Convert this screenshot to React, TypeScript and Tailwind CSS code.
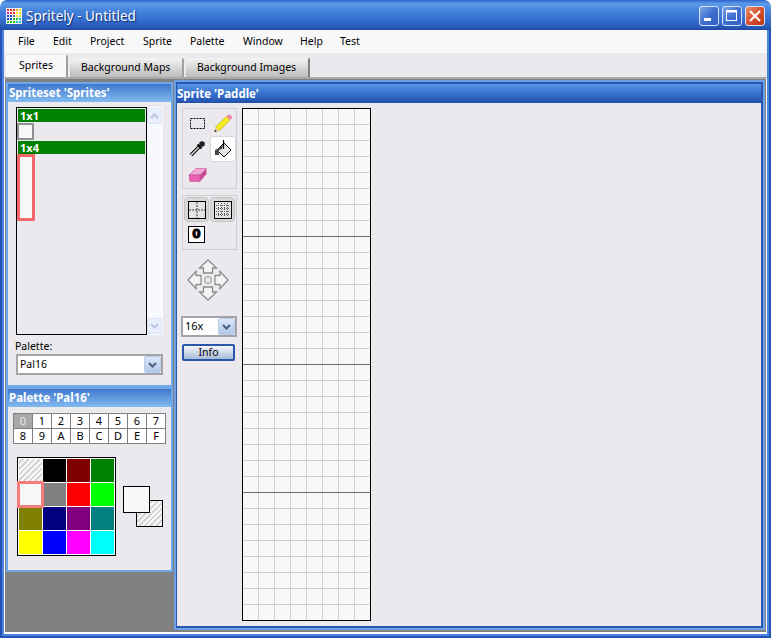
import React from 'react';

const hatch = 'bg-[repeating-linear-gradient(135deg,#f8f8f8_0px,#f8f8f8_2px,#d4d4d4_2px,#d4d4d4_4px)]';

const menus = [
  { label: 'File', w: 'w-[35px]' },
  { label: 'Edit', w: 'w-[37px]' },
  { label: 'Project', w: 'w-[53px]' },
  { label: 'Sprite', w: 'w-[47px]' },
  { label: 'Palette', w: 'w-[53px]' },
  { label: 'Window', w: 'w-[57px]' },
  { label: 'Help', w: 'w-[40px]' },
  { label: 'Test', w: 'w-[40px]' },
];

const swatches = [
  'bg-[#f8f8f8]', 'bg-black', 'bg-[#800000]', 'bg-[#008000]',
  'bg-[#f8f8f8]', 'bg-[#808080]', 'bg-[#ff0000]', 'bg-[#00ff00]',
  'bg-[#808000]', 'bg-[#000080]', 'bg-[#800080]', 'bg-[#008080]',
  'bg-[#ffff00]', 'bg-[#0000ff]', 'bg-[#ff00ff]', 'bg-[#00ffff]',
];

const digits = ['0', '1', '2', '3', '4', '5', '6', '7', '8', '9', 'A', 'B', 'C', 'D', 'E', 'F'];

function AppIcon() {
  const rows = [
    ['#e03030', '#e03030', '#e03030', '#f0a020', '#f0e020'],
    ['#c020c0', '#e03030', '#e03030', '#f0e020', '#f0e020'],
    ['#2040e0', '#2040e0', '#808080', '#f0e020', '#f0e020'],
    ['#2040e0', '#2040e0', '#20c020', '#20c020', '#20c0c0'],
    ['#20c020', '#20c020', '#20c020', '#20c0c0', '#20c0c0'],
  ];
  return (
    <svg width="16" height="16" viewBox="0 0 16 16" className="shrink-0">
      <rect width="16" height="16" fill="#f4f4f4" />
      {rows.map((row, y) => row.map((c, x) => (
        <rect key={`${x}-${y}`} x={1 + x * 3} y={1 + y * 3} width="2" height="2" fill={c} />
      )))}
    </svg>
  );
}

function CaptionButton({ kind }: { kind: 'min' | 'max' | 'close' }) {
  const bg = kind === 'close'
    ? 'bg-[linear-gradient(135deg,#e8906c,#d8502c_50%,#b83414)]'
    : 'bg-[linear-gradient(135deg,#7ea6e8,#3f70d0_50%,#2f5cc0)]';
  return (
    <div className={`w-[20px] h-[20px] rounded-[3px] border border-[#d8e4f8] flex items-center justify-center ${bg}`}>
      <svg width="16" height="16" viewBox="0 0 16 16">
        {kind === 'min' && <rect x="3" y="10" width="7" height="3" fill="#fff" />}
        {kind === 'max' && (
          <g fill="none" stroke="#fff">
            <rect x="2.5" y="2.5" width="10" height="10" />
            <path d="M2 3.5H13" strokeWidth="2" />
          </g>
        )}
        {kind === 'close' && <path d="M3 3L13 13M13 3L3 13" stroke="#fff" strokeWidth="2.2" />}
      </svg>
    </div>
  );
}

function ComboArrow() {
  return (
    <div className="w-[17px] self-stretch rounded-[2px] border border-[#b8cce8] bg-[linear-gradient(#dbe6f8,#b4c8ea)] flex items-center justify-center">
      <svg width="9" height="6" viewBox="0 0 9 6">
        <path d="M1 1L4.5 4.5L8 1" fill="none" stroke="#4d6185" strokeWidth="2" />
      </svg>
    </div>
  );
}

function SelectIcon() {
  return (
    <svg width="24" height="24" viewBox="0 0 24 24">
      <rect x="5.5" y="7.5" width="14" height="10" fill="none" stroke="#000" strokeDasharray="2 1" />
    </svg>
  );
}

function PencilIcon() {
  return (
    <svg width="24" height="24" viewBox="0 0 24 24">
      <path d="M4.5 16L15.5 5.5L19 9L8 20Z" fill="#f4ea20" stroke="#b8a800" strokeWidth="0.6" />
      <path d="M15.5 5.5L17.5 3.5Q19 3 20.5 5T19 9Z" fill="#f088b0" />
      <path d="M4.5 16L3.5 21L8 20Z" fill="#e8d8a0" />
      <path d="M3.5 21L4 18.5L6 20.5Z" fill="#202020" />
    </svg>
  );
}

function DropperIcon() {
  return (
    <svg width="24" height="24" viewBox="0 0 24 24">
      <path d="M6 18L14 10" stroke="#000" strokeWidth="3.6" />
      <path d="M6 18L14 10" stroke="#d8d8d8" strokeWidth="1.6" />
      <path d="M12.5 7.5L16.5 11.5" stroke="#000" strokeWidth="2" />
      <circle cx="17" cy="7" r="2.8" fill="#202020" />
    </svg>
  );
}

function FillIcon() {
  return (
    <svg width="24" height="24" viewBox="0 0 24 24">
      <path d="M13 6L20 13L13 20L6 13Z" fill="#e4e4e4" stroke="#000" />
      <path d="M6 12L12 8L11 12L8 13L8 18H4V13Z" fill="#484848" />
      <path d="M12.5 3V12" stroke="#000" strokeWidth="1.2" />
    </svg>
  );
}

function EraserIcon() {
  return (
    <svg width="24" height="24" viewBox="0 0 24 24">
      <path d="M4 12L11 5.5H21.5L15 12Z" fill="#f4a8d4" stroke="#c05098" strokeWidth="0.6" />
      <path d="M4 12H15V18.5H5Z" fill="#e860b0" stroke="#c05098" strokeWidth="0.6" />
      <path d="M15 12L21.5 5.5V11L15 18.5Z" fill="#c84c98" />
    </svg>
  );
}

function GridCross() {
  return (
    <svg width="18" height="18" viewBox="0 0 18 18">
      <rect x="0.5" y="0.5" width="17" height="17" fill="#e4e4e4" stroke="#000" />
      <path d="M9 1V17M1 9H17" stroke="#404040" strokeDasharray="2 1" />
    </svg>
  );
}

function GridFine() {
  return (
    <svg width="18" height="18" viewBox="0 0 18 18">
      <rect x="0.5" y="0.5" width="17" height="17" fill="#e4e4e4" stroke="#000" />
      <path d="M4.5 2V16M7.5 2V16M10.5 2V16M13.5 2V16M2 4.5H16M2 7.5H16M2 10.5H16M2 13.5H16" stroke="#606060" strokeDasharray="1 1" />
    </svg>
  );
}

function MoveArrows() {
  const arrow = 'M0 -20L8.5 -12H4.5V-7H-4.5V-12H-8.5Z';
  return (
    <svg width="44" height="44" viewBox="-22 -22 44 44">
      {[0, 90, 180, 270].map(r => (
        <path key={r} d={arrow} transform={`rotate(${r})`} fill="#f4f4f6" stroke="#8c8c8c" strokeWidth="1.3" />
      ))}
      <circle cx="0" cy="0" r="3.5" fill="#ebe9ed" stroke="#8c8c8c" />
    </svg>
  );
}

function ScrollButton({ up }: { up?: boolean }) {
  return (
    <div className="h-[16px] rounded-[2px] border border-[#dfe6f6] bg-[#e8eefb] flex items-center justify-center">
      <svg width="9" height="6" viewBox="0 0 9 6">
        <path d={up ? 'M1 5L4.5 1.5L8 5' : 'M1 1L4.5 4.5L8 1'} fill="none" stroke="#b8c6e0" strokeWidth="2" />
      </svg>
    </div>
  );
}

function PanelTitle({ children }: { children: React.ReactNode }) {
  return (
    <div className="h-[18px] shrink-0 pl-[1px] flex items-center bg-[linear-gradient(#3f78cc,#82baf0)] text-white font-bold text-[11.5px] whitespace-nowrap">
      {children}
    </div>
  );
}

export default function App() {
  return (
    <div className='w-[771px] h-[638px] flex flex-col overflow-hidden text-[10.5px] text-black bg-white font-["Noto_Sans",sans-serif]'>
      {/* title bar */}
      <div className="h-[30px] shrink-0 rounded-t-[7px] flex items-center pl-[6px] pr-[6px] bg-[linear-gradient(#2c64cc,#5c9ae8_12%,#4484dc_35%,#3a74d4_60%,#2858b8_90%,#2048a4)]">
        <div className="mt-[2px]"><AppIcon /></div>
        <span className="ml-[4px] mt-[3px] text-white text-[13.5px] [text-shadow:1px_1px_1px_#0f2a70] flex-1">Spritely - Untitled</span>
        <div className="flex gap-[3px] mt-[2px]">
          <CaptionButton kind="min" />
          <CaptionButton kind="max" />
          <CaptionButton kind="close" />
        </div>
      </div>

      <div className="flex-1 min-h-0 flex border-x-2 border-b-2 border-[#2453b8]">
        <div className="flex-1 min-w-0 flex flex-col border-x-2 border-b-2 border-[#4a84dc]">
          <div className="flex-1 min-h-0 flex flex-col border-b-2 border-white bg-[#ebe9ed]">
            {/* menu */}
            <div className="h-[23px] shrink-0 pl-[14px] pt-[1px] flex items-center bg-[#f8f8f8]">
              {menus.map(m => (
                <span key={m.label} className={m.w}>{m.label}</span>
              ))}
            </div>

            {/* tabs */}
            <div className="h-[24px] shrink-0 flex items-end pl-[2px] gap-[2px]">
              <div className="w-[62px] h-[22px] pl-[13px] pb-[1px] rounded-t-[2px] border-r-2 border-[#a0a0a0] bg-[#f8f8f8] flex items-center">Sprites</div>
              <div className="w-[114px] h-[19px] pl-[11px] rounded-t-[2px] border-r-2 border-[#a0a0a0] bg-[linear-gradient(#f4f4f4,#bcbcbc)] flex items-center whitespace-nowrap">Background Maps</div>
              <div className="w-[124px] h-[19px] pl-[11px] rounded-t-[2px] border-r-2 border-[#808080] bg-[linear-gradient(#f4f4f4,#bcbcbc)] flex items-center whitespace-nowrap">Background Images</div>
            </div>

            {/* work area */}
            <div className="flex-1 min-h-0 flex border-t-2 border-t-[#a8a8a8] border-l border-l-white border-r border-r-white bg-[#808080] pt-[1px]">
              <div className="w-[169px] shrink-0 flex flex-col pt-[2px] pl-[1px] pr-[1px]">
                {/* spriteset */}
                <div className="h-[305px] shrink-0 flex flex-col border-2 border-[#6ea8e8] bg-[#ebe9ed]">
                  <PanelTitle>Spriteset 'Sprites'</PanelTitle>
                  <div className="pl-[8px] pt-[5px]">
                    <div className="flex">
                      <div className="w-[131px] h-[228px] border border-black p-[1px]">
                        <div className="h-[13px] bg-[#008000] text-white font-bold text-[11px] leading-[13px] pl-[2px]">1x1</div>
                        <div className="w-[17px] h-[17px] mt-[1px] -ml-[1px] border-2 border-[#909090] bg-[#f8f8f8]"></div>
                        <div className="h-[13px] mt-[1px] bg-[#008000] text-white font-bold text-[11px] leading-[13px] pl-[2px]">1x4</div>
                        <div className="w-[18px] h-[67px] -ml-[1px] border-[3px] border-[#f4686c] bg-[#f8f8f8]"></div>
                      </div>
                      <div className="w-[16px] h-[228px] bg-[#f8f9ff] flex flex-col justify-between py-[1px] pr-[1px]">
                        <ScrollButton up />
                        <ScrollButton />
                      </div>
                    </div>
                    <div className="mt-[4px] -ml-[1px] h-[14px] leading-[14px]">Palette:</div>
                    <div className="mt-[1px] w-[147px] h-[21px] border-2 border-[#a4a4a8] bg-white flex items-center pl-[2px]">
                      <span className="flex-1">Pal16</span>
                      <ComboArrow />
                    </div>
                  </div>
                </div>

                {/* palette */}
                <div className="h-[185px] shrink-0 flex flex-col border-2 border-[#6ea8e8] bg-[#ebe9ed]">
                  <PanelTitle>Palette 'Pal16'</PanelTitle>
                  <div className="pl-[5px] pt-[6px]">
                    <div className="w-[153px] grid grid-cols-8 border-t border-l border-[#808080] bg-white">
                      {digits.map((d, i) => (
                        <div key={d} className={`h-[15px] border-r border-b border-[#808080] flex items-center justify-center text-[11px] ${i === 0 ? 'bg-[#a8a8a8] text-[#e8e8e8]' : ''}`}>{d}</div>
                      ))}
                    </div>
                    <div className="flex mt-[13px] ml-[4px]">
                      <div className="w-[99px] h-[99px] border border-black bg-white p-[1px] grid grid-cols-[repeat(4,23px)] grid-rows-[repeat(4,23px)] gap-[1px]">
                        {swatches.map((c, i) => (
                          <div key={i} className={i === 0 ? hatch : i === 4 ? `${c} relative` : c}>
                            {i === 4 && <div className="absolute -left-[2px] -top-[2px] w-[27px] h-[27px] border-[3px] border-[#f47c7c] bg-[#f8f8f8]"></div>}
                          </div>
                        ))}
                      </div>
                      <div className="relative ml-[7px] mt-[29px] w-[40px] h-[41px]">
                        <div className={`absolute left-[13px] top-[14px] w-[27px] h-[27px] border border-black ${hatch}`}></div>
                        <div className="absolute left-0 top-0 w-[27px] h-[27px] border border-black bg-[#f8f8f8]"></div>
                      </div>
                    </div>
                  </div>
                </div>
              </div>

              {/* sprite editor */}
              <div className="flex-1 min-w-0 mb-[2px] mr-[1px] flex border-2 border-[#6ea0e4]">
                <div className="flex-1 min-w-0 flex flex-col border-2 border-l border-[#2a56b4] bg-[#ebe9ed]">
                  <div className="h-[19px] shrink-0 pt-[1px] flex items-center bg-[linear-gradient(#5a98e4,#3a74d0_45%,#2050ac)] text-white font-bold text-[11.5px]">Sprite 'Paddle'</div>
                  <div className="flex-1 min-h-0 flex pt-[5px] pl-[5px]">
                    <div className="w-[60px] shrink-0 flex flex-col">
                      <div className="w-[55px] h-[81px] border border-[#d0d0d4] grid grid-cols-[26px_26px] grid-rows-[26px_26px_26px] pl-[1px] pt-[1px]">
                        <div className="flex items-center justify-center"><SelectIcon /></div>
                        <div className="flex items-center justify-center"><PencilIcon /></div>
                        <div className="flex items-center justify-center"><DropperIcon /></div>
                        <div className="flex items-center justify-center rounded-[3px] bg-white border border-[#d8d8dc]"><FillIcon /></div>
                        <div className="flex items-center justify-center"><EraserIcon /></div>
                      </div>
                      <div className="mt-[6px] w-[55px] h-[55px] border border-[#d0d0d4] pl-[1px] pt-[1px]">
                        <div className="flex gap-[1px]">
                          <div className="w-[25px] h-[25px] rounded-[4px] bg-[#d8d8d8] border border-[#c4c4c4] flex items-center justify-center"><GridCross /></div>
                          <div className="w-[25px] h-[25px] rounded-[4px] bg-[#d8d8d8] border border-[#c4c4c4] flex items-center justify-center"><GridFine /></div>
                        </div>
                        <div className="mt-[4px] ml-[4px] w-[17px] h-[17px] border border-black bg-white flex items-center justify-center">
                          <span className="text-black text-[12px] leading-[13px] font-bold [-webkit-text-stroke:1px_black] font-['DejaVu_Sans',sans-serif]">0</span>
                        </div>
                      </div>
                      <div className="mt-[8px] ml-[4px]"><MoveArrows /></div>
                      <div className="mt-[14px] -ml-[1px] w-[56px] h-[21px] border-2 border-[#a4a4a8] bg-white flex items-center pl-[2px] text-[11px]">
                        <span className="flex-1">16x</span>
                        <ComboArrow />
                      </div>
                      <div className="mt-[7px] w-[53px] h-[17px] rounded-[2px] border-2 border-[#2a56a8] bg-[linear-gradient(#f4f6fa,#a8bcd8)] flex items-center justify-center">Info</div>
                    </div>
                    <div className="w-[129px] h-[513px] border border-black bg-[#f8f8f8] bg-[linear-gradient(to_bottom,#707070_1px,transparent_1px),linear-gradient(to_right,#d0d0d0_1px,transparent_1px),linear-gradient(to_bottom,#d0d0d0_1px,transparent_1px)] bg-[size:128px_128px,16px_16px,16px_16px] bg-[position:0_-1px,-1px_0,0_-1px]"></div>
                  </div>
                </div>
              </div>
            </div>
          </div>
        </div>
      </div>
    </div>
  );
}
